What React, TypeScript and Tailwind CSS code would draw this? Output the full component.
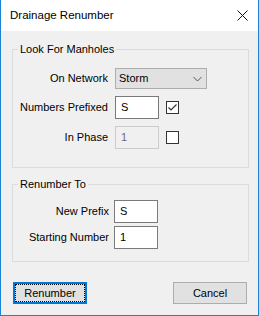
import React from 'react';

const font = { fontFamily: '"Liberation Sans", Arial, sans-serif' };

function TextBox({ value, disabled = false }: { value: string; disabled?: boolean }) {
  return (
    <div
      className={`w-[44px] h-[23px] border pl-[5px] pt-[4px] leading-[13px] ${
        disabled ? 'border-[#cccccc] bg-[#f0f0f0] text-[#6d6d6d]' : 'border-[#7a7a7a] bg-white text-black'
      }`}
    >
      {value}
    </div>
  );
}

function CheckBox({ checked }: { checked: boolean }) {
  return (
    <div className="w-[13px] h-[13px] border border-[#333333] bg-white flex items-center justify-center">
      {checked && (
        <svg width="11" height="11" viewBox="0 0 11 11">
          <path d="M1.5 5.5 L4 8 L9.5 2.5" fill="none" stroke="#333333" strokeWidth="1.2" />
        </svg>
      )}
    </div>
  );
}

function Row({ label, labelWidth = 'w-[95px]', gap = 'gap-[7px]', className = '', children }: {
  label: string;
  labelWidth?: string;
  gap?: string;
  className?: string;
  children: React.ReactNode;
}) {
  return (
    <div className={`flex items-center ${gap} ${className}`}>
      <div className={`${labelWidth} text-right`}>{label}</div>
      {children}
    </div>
  );
}

export default function App() {
  return (
    <div
      style={font}
      className="w-[259px] h-[316px] border border-t-0 border-[#1883d7] flex flex-col text-[11px] text-black bg-[#f0f0f0]"
    >
      {/* title bar */}
      <div className="h-[31px] bg-white flex items-center justify-between pl-[9px] pr-[9px] shrink-0">
        <span className="text-[11.5px] pt-[1px]">Drainage Renumber</span>
        <svg width="11" height="11" viewBox="0 0 11 11" className="mr-[1px]">
          <path d="M0.5 0.5 L10.5 10.5 M10.5 0.5 L0.5 10.5" stroke="#111111" strokeWidth="1" />
        </svg>
      </div>

      <div className="pt-[10px] pl-[11px] pr-[9px] flex flex-col">
        <fieldset className="border border-[#dcdcdc] pb-[18px]">
          <legend className="ml-[5px] px-[2px] leading-[16px]">Look For Manholes</legend>
          <Row label="On Network" className="mt-[11px]">
            <div className="w-[92px] h-[21px] border border-[#adadad] bg-[#e1e1e1] flex items-center justify-between pl-[3px] pr-[4px]">
              <span>Storm</span>
              <svg width="9" height="6" viewBox="0 0 9 6">
                <path d="M0.5 1 L4.5 5 L8.5 1" fill="none" stroke="#555555" strokeWidth="1" />
              </svg>
            </div>
          </Row>
          <Row label="Numbers Prefixed" className="mt-[7px]">
            <TextBox value="S" />
            <CheckBox checked />
          </Row>
          <Row label="In Phase" className="mt-[7px]">
            <TextBox value="1" disabled />
            <CheckBox checked={false} />
          </Row>
        </fieldset>

        <fieldset className="border border-[#dcdcdc] pb-[12px] mt-[8px]">
          <legend className="ml-[5px] px-[2px] leading-[16px]">Renumber To</legend>
          <Row label="New Prefix" labelWidth="w-[96px]" gap="gap-[5px]" className="mt-[8px]">
            <TextBox value="S" />
          </Row>
          <Row label="Starting Number" labelWidth="w-[96px]" gap="gap-[5px]" className="mt-[3px]">
            <TextBox value="1" />
          </Row>
        </fieldset>

        <div className="flex justify-between mt-[20px] pl-[1px] pr-[2px]">
          <button className="relative w-[74px] h-[22px] border-2 border-[#0078d7] bg-[#e1e1e1] flex items-center justify-center">
            <span className="absolute inset-0 border border-dotted border-black" />
            <span>Renumber</span>
          </button>
          <button className="w-[74px] h-[22px] border border-[#adadad] bg-[#e1e1e1] flex items-center justify-center">
            Cancel
          </button>
        </div>
      </div>
    </div>
  );
}
